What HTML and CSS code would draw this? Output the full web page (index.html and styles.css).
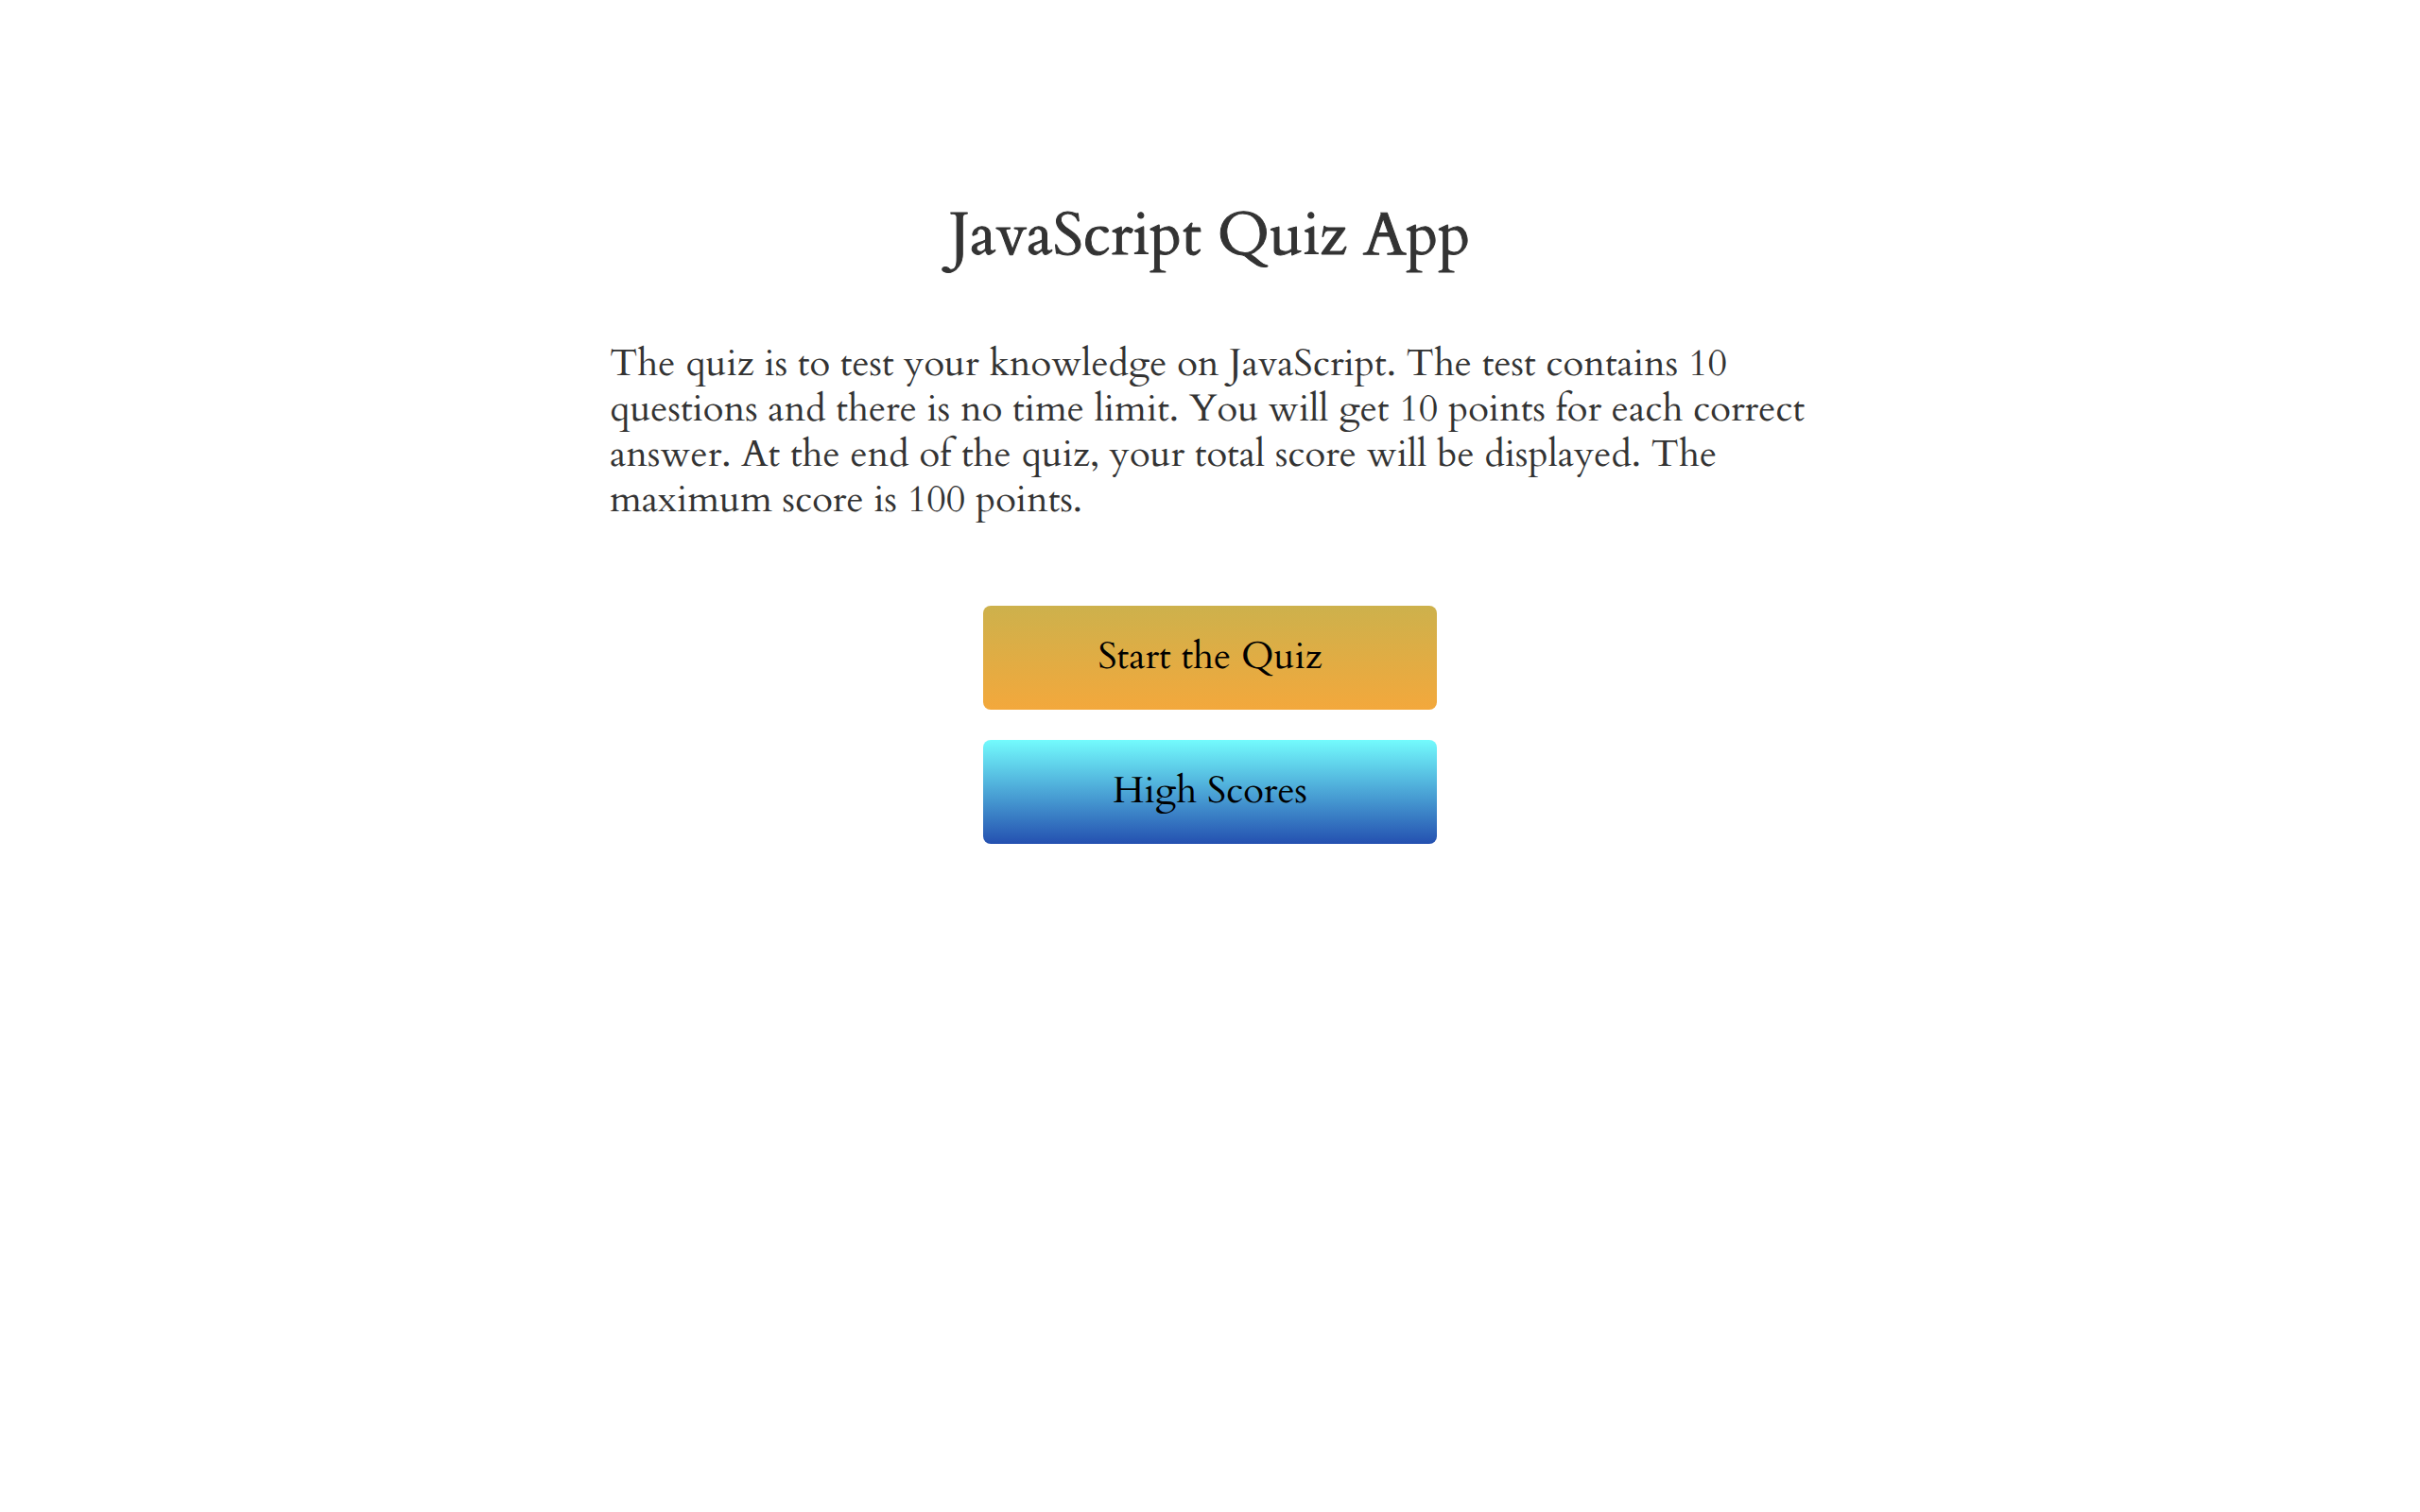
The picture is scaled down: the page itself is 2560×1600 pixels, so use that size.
FILE: index.html
```html
<!DOCTYPE html>
<html lang="en">
<head>
<meta charset="utf-8">
<meta name="viewport" content="width=device-width, initial-scale=1">
<title>JavaScript Quiz App</title>
<link rel="stylesheet" href="styles.css">
</head>
<body>
<main class="home">
  <h1 class="title">JavaScript Quiz App</h1>
  <p class="intro">The quiz is to test your knowledge on JavaScript. The test contains 10 questions and there is no time limit. You will get 10 points for each correct answer. At the end of the quiz, your total score will be displayed. The maximum score is 100 points.</p>
  <div class="actions">
    <button class="btn btn-start" type="button">Start the Quiz</button>
    <button class="btn btn-scores" type="button">High Scores</button>
  </div>
</main>
</body>
</html>
```
FILE: styles.css
```css
* {
  box-sizing: border-box;
  margin: 0;
  padding: 0;
}

body {
  background: #fff;
  color: #333;
  font-family: "Cardo", "EB Garamond", "Liberation Serif", serif;
}

.home {
  display: flex;
  flex-direction: column;
  align-items: center;
  width: 100%;
  max-width: 1310px;
  margin: 0 auto;
  padding: 201px 20px 0;
}

.title {
  font-size: 64px;
  font-weight: 400;
  line-height: 96px;
  -webkit-text-stroke: 1px currentColor;
}

.intro {
  width: 100%;
  margin-top: 64px;
  font-size: 40px;
  line-height: 48px;
}

.actions {
  display: flex;
  flex-direction: column;
  gap: 32px;
  width: 480px;
  max-width: 100%;
  margin-top: 88px;
}

.btn {
  height: 110px;
  padding-bottom: 2px;
  border: 0;
  border-radius: 8px;
  color: #000;
  font: inherit;
  font-size: 40px;
  line-height: 48px;
  cursor: pointer;
}

.btn-start {
  background: linear-gradient(#cdb14c, #f3a83c);
}

.btn-scores {
  background: linear-gradient(#73fbfd, #2450b0);
}
```
